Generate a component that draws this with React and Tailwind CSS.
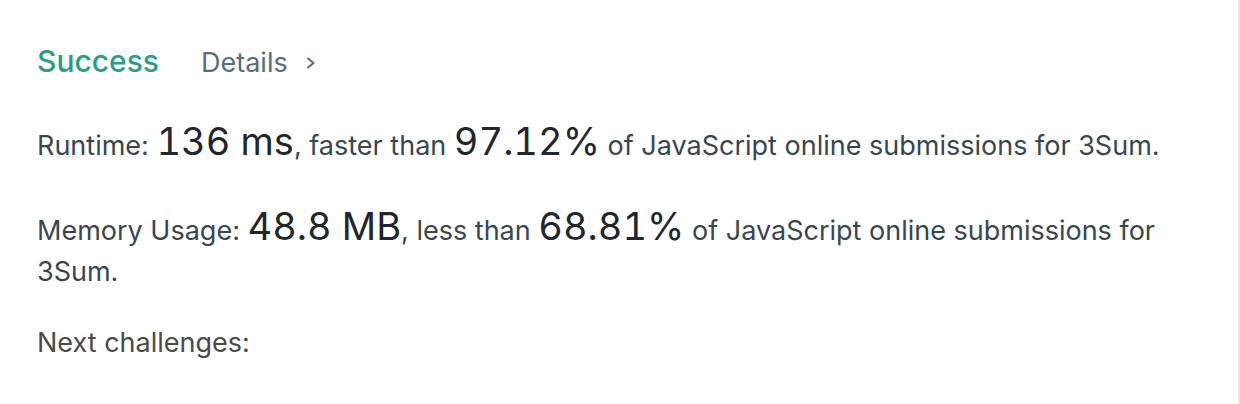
import React from 'react';

const font = { fontFamily: 'Inter, "Noto Sans", sans-serif' };

const Big = ({ children }) => (
  <span className="text-[38px] tabular-nums text-[#1e272c]">{children}</span>
);

export default function App() {
  return (
    <div className="w-[1240px] h-[404px] bg-white flex" style={font}>
      <div className="flex-1 border-r-2 border-[#e8e8e8] pl-[37px] pr-[42px] pt-[39px]">
        <div className="flex items-baseline h-[40px]">
          <span className="text-[30px] font-medium text-[#2a9d84]">Success</span>
          <span className="ml-[42px] text-[27px] text-[#546e7a]">Details</span>
          <svg className="ml-[17px] self-center mt-[8px]" width="12" height="14" viewBox="0 0 12 14" fill="none">
            <path d="M3 2.5 L8.5 7 L3 11.5" stroke="#546e7a" strokeWidth="2" strokeLinecap="round" strokeLinejoin="round" />
          </svg>
        </div>
        <p className="mt-[42px] text-[27px] leading-[41px] text-[#37474f]">
          Runtime: <Big>136 ms</Big>, faster than <Big>97.12%</Big> of JavaScript online submissions for 3Sum.
        </p>
        <p className="mt-[40px] text-[27px] leading-[41px] text-[#37474f]">
          Memory Usage: <Big>48.8 MB</Big>, less than <Big>68.81%</Big> of JavaScript online submissions for 3Sum.
        </p>
        <p className="mt-[30px] text-[27px] leading-[41px] text-[#4a4a4a]">Next challenges:</p>
      </div>
    </div>
  );
}
